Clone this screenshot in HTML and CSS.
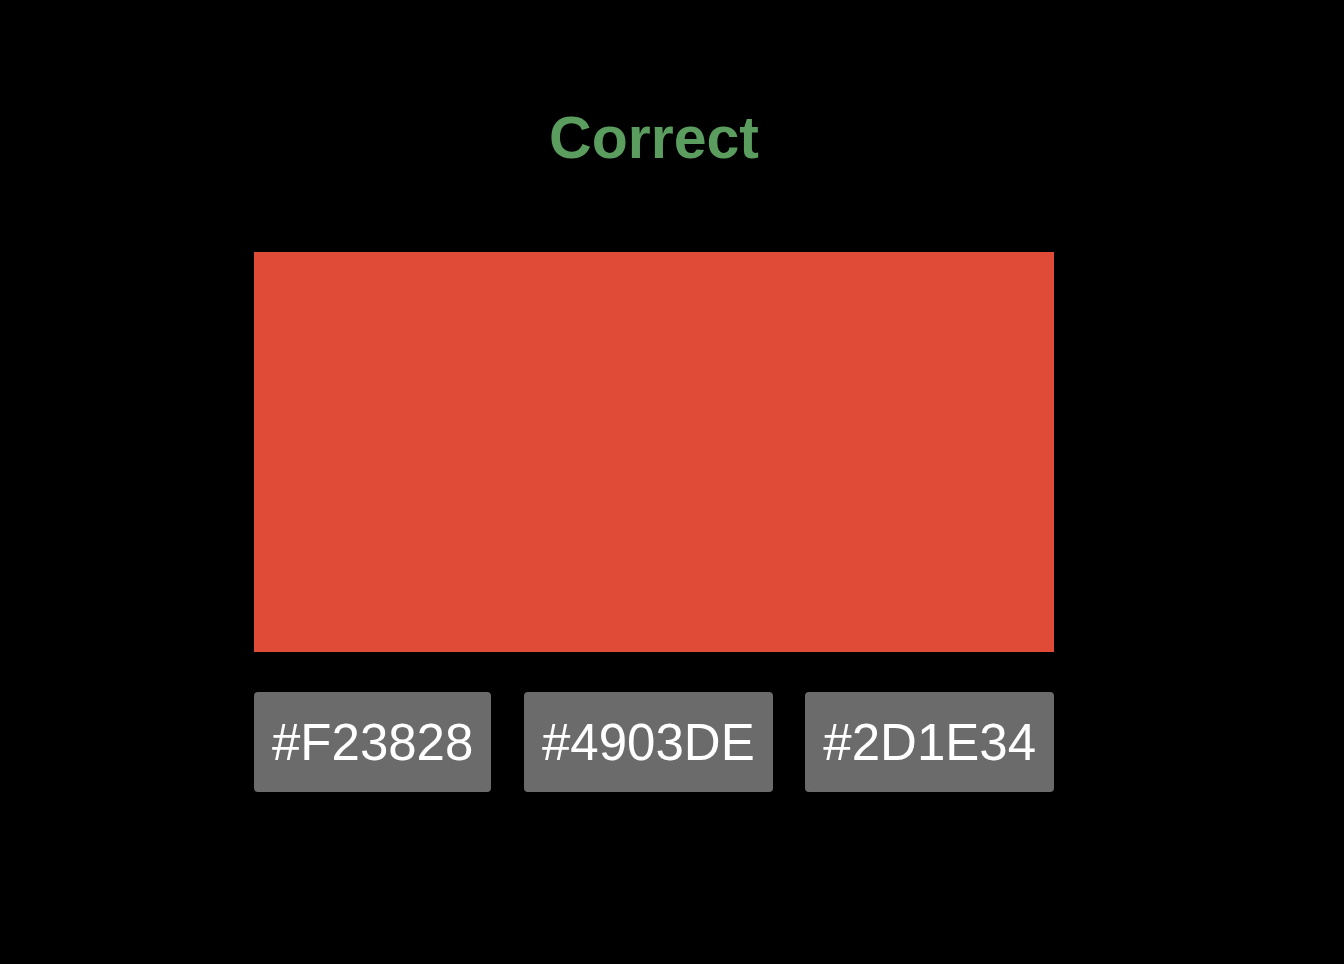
FILE: index.html
```html
<!DOCTYPE html>
<html>
<head>
<meta charset="utf-8">
<link rel="stylesheet" href="styles.css">
</head>
<body>
<div class="page">
  <div class="wrap">
    <h1 class="title">Correct</h1>
    <div class="swatch"></div>
    <div class="chips">
      <div class="chip">#F23828</div>
      <div class="chip">#4903DE</div>
      <div class="chip">#2D1E34</div>
    </div>
  </div>
</div>
</body>
</html>
```

FILE: styles.css
```css
html, body {
  margin: 0;
  padding: 0;
  background: #000;
  height: 100%;
}
.page {
  display: flex;
  justify-content: center;
  padding-right: 36px;
}
.wrap {
  width: 800px;
  display: flex;
  flex-direction: column;
  align-items: stretch;
}
.title {
  margin: 104px 0 0 0;
  height: 148px;
  font-family: "Liberation Sans", Arial, sans-serif;
  font-weight: bold;
  font-size: 59px;
  line-height: 68px;
  text-align: center;
  color: #5b9c5f;
}
.swatch {
  height: 400px;
  background: #e04b37;
}
.chips {
  margin-top: 40px;
  display: flex;
  justify-content: space-between;
}
.chip {
  height: 100px;
  padding: 0 18px;
  background: #6b6b6b;
  border-radius: 4px;
  color: #fff;
  font-family: "Liberation Sans", Arial, sans-serif;
  font-size: 51px;
  display: flex;
  align-items: center;
}
```
